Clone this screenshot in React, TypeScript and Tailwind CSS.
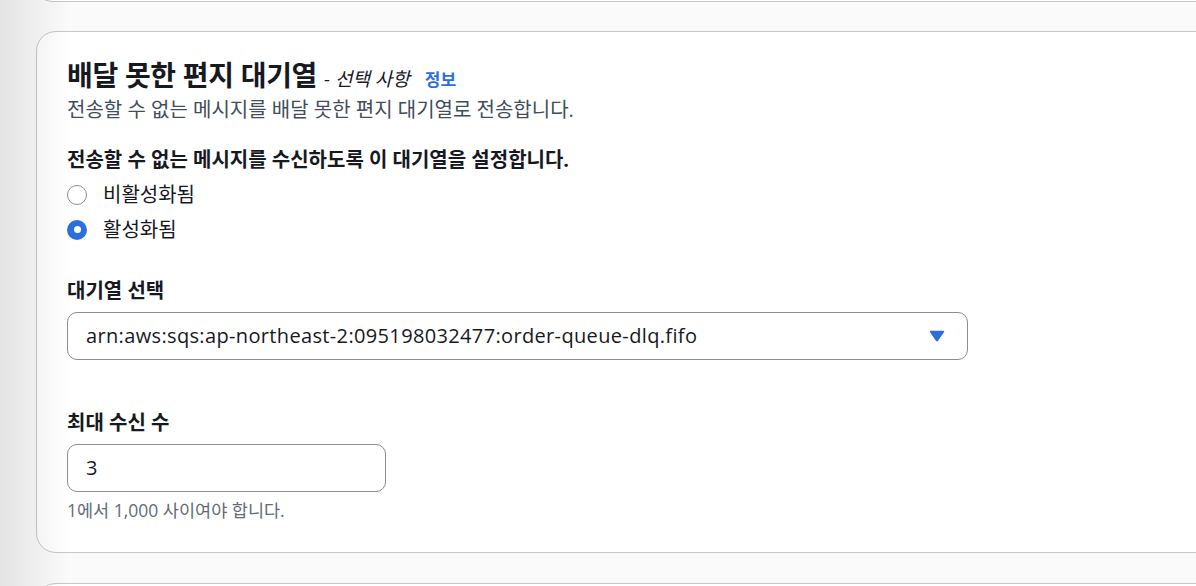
const FONT = { fontFamily: '"Open Sans", "Noto Sans CJK KR", sans-serif' };

function Radio({ label, checked }: { label: string; checked?: boolean }) {
  return (
    <label className="flex items-center gap-[16px] h-[35px]">
      {checked ? (
        <span className="w-[20px] h-[20px] rounded-full bg-[#2b6ee0] flex items-center justify-center">
          <span className="w-[7px] h-[7px] rounded-full bg-white" />
        </span>
      ) : (
        <span className="w-[20px] h-[20px] rounded-full border-[1.5px] border-[#8c8c94] bg-white" />
      )}
      <span className="text-[20px] text-[#16191f]">{label}</span>
    </label>
  );
}

export default function App() {
  return (
    <div className="relative w-[1196px] h-[586px] overflow-hidden bg-[#fafafa]" style={FONT}>
      {/* side shadow */}
      <div className="absolute inset-y-0 left-0 w-[70px] bg-gradient-to-r from-black/[0.09] to-transparent pointer-events-none z-10" />

      {/* previous container (bottom edge) */}
      <div className="ml-[36px] -mt-[30px] w-[1200px] h-[32px] bg-white border border-[#c6c6cd] rounded-[20px]" />

      {/* dead-letter queue container */}
      <section className="ml-[36px] mt-[29px] w-[1200px] h-[522px] bg-white border border-[#c6c6cd] rounded-[20px] pl-[30px] pt-[23px]">
        <div className="flex items-baseline">
          <h2 className="text-[28px] font-bold text-[#16191f] leading-[40px] tracking-[-0.3px]">
            배달 못한 편지 대기열
          </h2>
          <span className="ml-[7px] text-[19px] italic text-[#16191f]">- 선택 사항</span>
          <span className="ml-[15px] text-[17px] font-bold text-[#2b6ee0]">정보</span>
        </div>
        <p className="mt-[1px] text-[20px] text-[#414d5c] leading-[28px]">
          전송할 수 없는 메시지를 배달 못한 편지 대기열로 전송합니다.
        </p>

        <p className="mt-[22px] text-[20px] font-bold text-[#16191f] leading-[28px]">
          전송할 수 없는 메시지를 수신하도록 이 대기열을 설정합니다.
        </p>
        <div className="mt-[3px] flex flex-col">
          <Radio label="비활성화됨" />
          <Radio label="활성화됨" checked />
        </div>

        <p className="mt-[30px] text-[20px] font-bold text-[#16191f] leading-[28px]">대기열 선택</p>
        <div className="mt-[7px] w-[901px] h-[48px] border border-[#8c8c94] rounded-[10px] flex items-center justify-between pl-[18px] pr-[22px]">
          <span className="text-[20px] tracking-[0.35px] text-[#16191f]">
            arn:aws:sqs:ap-northeast-2:095198032477:order-queue-dlq.fifo
          </span>
          <svg width="16" height="12" viewBox="0 0 16 12">
            <path d="M1.5 1.5 H14.5 L8.6 10.2 Q8 11 7.4 10.2 Z" fill="#2b6ee0" stroke="#2b6ee0" strokeWidth="1.5" strokeLinejoin="round" />
          </svg>
        </div>

        <p className="mt-[49px] text-[20px] font-bold text-[#16191f] leading-[28px]">최대 수신 수</p>
        <div className="mt-[7px] w-[319px] h-[48px] border border-[#8c8c94] rounded-[10px] flex items-center pl-[18px]">
          <span className="text-[20px] text-[#16191f]">3</span>
        </div>
        <p className="mt-[6px] text-[17.5px] text-[#5f6b7a] leading-[24px]">1에서 1,000 사이여야 합니다.</p>
      </section>

      {/* next container (top edge) */}
      <div className="ml-[36px] mt-[30px] w-[1200px] h-[60px] bg-white border border-[#c6c6cd] rounded-[20px]" />
    </div>
  );
}
